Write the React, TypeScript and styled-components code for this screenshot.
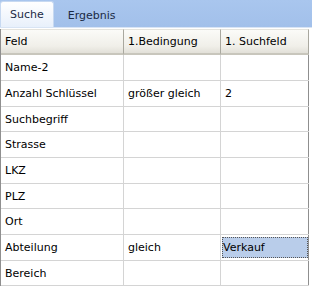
import { Fragment } from 'react';
import styled, { createGlobalStyle } from 'styled-components';

const GlobalStyle = createGlobalStyle`
	html, body {
		margin: 0;
		padding: 0;
		background: #fff;
	}
	body {
		font-family: 'DejaVu Sans', 'Liberation Sans', sans-serif;
		font-size: 11px;
		color: #000;
	}
`;

const Page = styled.div`
	width: 312px;
	height: 287px;
	overflow: hidden;
	background: #fff;
`;
const TabStrip = styled.div`
	height: 28px;
	background: linear-gradient(#a9c6ee, #a2c0ea);
	display: flex;
	align-items: flex-end;
	border-bottom: 1px solid #d8e4f4;
	box-sizing: border-box;
`;
const Tab = styled.div<{ $active?: boolean }>`
	height: ${(p) => (p.$active ? '26px' : '24px')};
	padding: 0 9px;
	margin-left: ${(p) => (p.$active ? '0' : '4px')};
	display: flex;
	align-items: center;
	box-sizing: border-box;
	font-family: 'DejaVu Sans', sans-serif;
	font-size: 11px;
	color: #1b2a44;
	border-radius: 3px 3px 0 0;
	background: ${(p) => (p.$active ? 'linear-gradient(#ffffff, #e8f0fb)' : 'transparent')};
	border: ${(p) => (p.$active ? '1px solid #c7d9f1' : '1px solid transparent')};
	border-bottom: none;
`;
const Grid = styled.div`
	display: grid;
	grid-template-columns: 123px 97px 88px;
	width: 309px;
	border-left: 1px solid #8f8f8f;
	border-right: 1px solid #8f8f8f;
	margin-top: 1px;
	box-sizing: border-box;
`;
const HeadCell = styled.div`
	height: 26px;
	display: flex;
	align-items: center;
	padding-left: 4px;
	box-sizing: border-box;
	background: linear-gradient(#fbfbf8, #f0efe9 70%, #e2e0d8);
	border-bottom: 2px solid #c8c6bc;
	border-right: 1px solid #a9a89f;
	border-top: 1px solid #e4e3dd;
	&:last-child {
		border-right: none;
	}
`;
const Cell = styled.div<{ $short?: boolean; $selected?: boolean }>`
	height: ${(p) => (p.$short ? '25px' : '26px')};
	display: flex;
	align-items: center;
	padding-left: 4px;
	box-sizing: border-box;
	border-right: 1px solid #d4d4d4;
	border-bottom: 1px solid #d4d4d4;
	white-space: nowrap;
	position: relative;
	&:nth-child(3n) {
		border-right: none;
	}
	${(p) =>
		p.$selected &&
		`
		&::before {
			content: '';
			position: absolute;
			left: 1px;
			top: 2px;
			right: 1px;
			bottom: 2px;
			background: #b9cdea;
			border: 1px dotted #555;
		}
		> span { position: relative; left: -2px; }
	`}
`;

const rows: [string, string, string][] = [
	['Name-2', '', ''],
	['Anzahl Schlüssel', 'größer gleich', '2'],
	['Suchbegriff', '', ''],
	['Strasse', '', ''],
	['LKZ', '', ''],
	['PLZ', '', ''],
	['Ort', '', ''],
	['Abteilung', 'gleich', 'Verkauf'],
	['Bereich', '', ''],
];

export default function App() {
	return (
		<Page>
			<GlobalStyle />
			<TabStrip>
				<Tab $active>Suche</Tab>
				<Tab>Ergebnis</Tab>
			</TabStrip>
			<Grid>
				<HeadCell>Feld</HeadCell>
				<HeadCell>1.Bedingung</HeadCell>
				<HeadCell>1. Suchfeld</HeadCell>
				{rows.map(([feld, bed, such], i) => {
					const short = i % 3 === 2;
					return (
						<Fragment key={feld}>
							<Cell $short={short}>
								<span>{feld}</span>
							</Cell>
							<Cell $short={short}>
								<span>{bed}</span>
							</Cell>
							<Cell $short={short} $selected={such === 'Verkauf'}>
								<span>{such}</span>
							</Cell>
						</Fragment>
					);
				})}
			</Grid>
		</Page>
	);
}
